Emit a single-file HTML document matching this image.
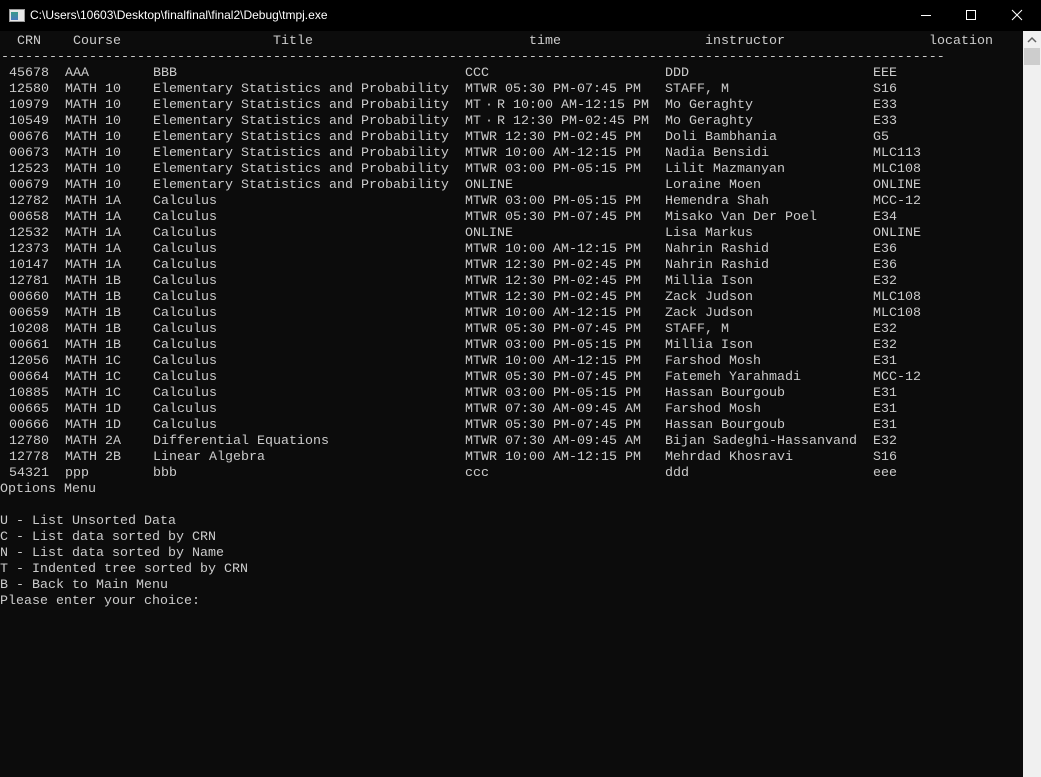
<!DOCTYPE html>
<html><head><meta charset="utf-8"><style>
html,body{margin:0;padding:0;width:1041px;height:777px;overflow:hidden;background:#0c0c0c}
#tb{position:absolute;left:0;top:0;width:1041px;height:31px;background:#000;color:#fff;font:12px "Liberation Sans",sans-serif}
#tb .t{position:absolute;left:30px;top:8px}
#tb .ic{position:absolute;left:9px;top:9px;width:14px;height:11px;background:#e8e8e8;border:1px solid #999}
#tb .ic:before{content:"";position:absolute;left:1px;top:2px;width:7px;height:8px;background:linear-gradient(#3a9a8a,#4a7ac0)}
#con{position:absolute;left:1px;top:34px;font-family:"Liberation Mono",monospace;font-size:13.333px;color:#cccccc;line-height:16px}
.r{position:relative;height:16px;white-space:pre}
.r span{position:absolute;top:0}
.c1{left:8px}.c2{left:64px}.c3{left:152px}.c4{left:464px}.c5{left:664px}.c6{left:872px}
.d{display:inline-block;width:16px;text-align:center}
#sb{position:absolute;left:1023px;top:31px;width:18px;height:746px;background:#f0f0f0}
#th{position:absolute;left:1024px;top:48px;width:16px;height:17px;background:#cdcdcd}
</style></head><body>
<div id="tb"><div class="ic"></div><div class="t">C:\Users\10603\Desktop\finalfinal\final2\Debug\tmpj.exe</div>
<svg style="position:absolute;left:0;top:0" width="1041" height="31"><g stroke="#fff" stroke-width="1" fill="none"><line x1="921" y1="15.5" x2="931" y2="15.5"/><rect x="966.5" y="10.5" width="9" height="9"/><line x1="1012" y1="10" x2="1022" y2="20"/><line x1="1022" y1="10" x2="1012" y2="20"/></g></svg></div>
<div id="sb"><svg width="18" height="18"><path d="M5 11 L9 7 L13 11" stroke="#606060" stroke-width="1.5" fill="none"/></svg></div><div id="th"></div>
<div id="con">
<div class="r"><span style="left:16px">CRN</span><span style="left:72px">Course</span><span style="left:272px">Title</span><span style="left:528px">time</span><span style="left:704px">instructor</span><span style="left:928px">location</span></div>
<div class="r">----------------------------------------------------------------------------------------------------------------------</div>
<div class="r"><span class="c1">45678</span><span class="c2">AAA</span><span class="c3">BBB</span><span class="c4">CCC</span><span class="c5">DDD</span><span class="c6">EEE</span></div>
<div class="r"><span class="c1">12580</span><span class="c2">MATH 10</span><span class="c3">Elementary Statistics and Probability</span><span class="c4">MTWR 05:30 PM-07:45 PM</span><span class="c5">STAFF, M</span><span class="c6">S16</span></div>
<div class="r"><span class="c1">10979</span><span class="c2">MATH 10</span><span class="c3">Elementary Statistics and Probability</span><span class="c4">MT<i class="d" style="font-style:normal">·</i>R 10:00 AM-12:15 PM</span><span class="c5">Mo Geraghty</span><span class="c6">E33</span></div>
<div class="r"><span class="c1">10549</span><span class="c2">MATH 10</span><span class="c3">Elementary Statistics and Probability</span><span class="c4">MT<i class="d" style="font-style:normal">·</i>R 12:30 PM-02:45 PM</span><span class="c5">Mo Geraghty</span><span class="c6">E33</span></div>
<div class="r"><span class="c1">00676</span><span class="c2">MATH 10</span><span class="c3">Elementary Statistics and Probability</span><span class="c4">MTWR 12:30 PM-02:45 PM</span><span class="c5">Doli Bambhania</span><span class="c6">G5</span></div>
<div class="r"><span class="c1">00673</span><span class="c2">MATH 10</span><span class="c3">Elementary Statistics and Probability</span><span class="c4">MTWR 10:00 AM-12:15 PM</span><span class="c5">Nadia Bensidi</span><span class="c6">MLC113</span></div>
<div class="r"><span class="c1">12523</span><span class="c2">MATH 10</span><span class="c3">Elementary Statistics and Probability</span><span class="c4">MTWR 03:00 PM-05:15 PM</span><span class="c5">Lilit Mazmanyan</span><span class="c6">MLC108</span></div>
<div class="r"><span class="c1">00679</span><span class="c2">MATH 10</span><span class="c3">Elementary Statistics and Probability</span><span class="c4">ONLINE</span><span class="c5">Loraine Moen</span><span class="c6">ONLINE</span></div>
<div class="r"><span class="c1">12782</span><span class="c2">MATH 1A</span><span class="c3">Calculus</span><span class="c4">MTWR 03:00 PM-05:15 PM</span><span class="c5">Hemendra Shah</span><span class="c6">MCC-12</span></div>
<div class="r"><span class="c1">00658</span><span class="c2">MATH 1A</span><span class="c3">Calculus</span><span class="c4">MTWR 05:30 PM-07:45 PM</span><span class="c5">Misako Van Der Poel</span><span class="c6">E34</span></div>
<div class="r"><span class="c1">12532</span><span class="c2">MATH 1A</span><span class="c3">Calculus</span><span class="c4">ONLINE</span><span class="c5">Lisa Markus</span><span class="c6">ONLINE</span></div>
<div class="r"><span class="c1">12373</span><span class="c2">MATH 1A</span><span class="c3">Calculus</span><span class="c4">MTWR 10:00 AM-12:15 PM</span><span class="c5">Nahrin Rashid</span><span class="c6">E36</span></div>
<div class="r"><span class="c1">10147</span><span class="c2">MATH 1A</span><span class="c3">Calculus</span><span class="c4">MTWR 12:30 PM-02:45 PM</span><span class="c5">Nahrin Rashid</span><span class="c6">E36</span></div>
<div class="r"><span class="c1">12781</span><span class="c2">MATH 1B</span><span class="c3">Calculus</span><span class="c4">MTWR 12:30 PM-02:45 PM</span><span class="c5">Millia Ison</span><span class="c6">E32</span></div>
<div class="r"><span class="c1">00660</span><span class="c2">MATH 1B</span><span class="c3">Calculus</span><span class="c4">MTWR 12:30 PM-02:45 PM</span><span class="c5">Zack Judson</span><span class="c6">MLC108</span></div>
<div class="r"><span class="c1">00659</span><span class="c2">MATH 1B</span><span class="c3">Calculus</span><span class="c4">MTWR 10:00 AM-12:15 PM</span><span class="c5">Zack Judson</span><span class="c6">MLC108</span></div>
<div class="r"><span class="c1">10208</span><span class="c2">MATH 1B</span><span class="c3">Calculus</span><span class="c4">MTWR 05:30 PM-07:45 PM</span><span class="c5">STAFF, M</span><span class="c6">E32</span></div>
<div class="r"><span class="c1">00661</span><span class="c2">MATH 1B</span><span class="c3">Calculus</span><span class="c4">MTWR 03:00 PM-05:15 PM</span><span class="c5">Millia Ison</span><span class="c6">E32</span></div>
<div class="r"><span class="c1">12056</span><span class="c2">MATH 1C</span><span class="c3">Calculus</span><span class="c4">MTWR 10:00 AM-12:15 PM</span><span class="c5">Farshod Mosh</span><span class="c6">E31</span></div>
<div class="r"><span class="c1">00664</span><span class="c2">MATH 1C</span><span class="c3">Calculus</span><span class="c4">MTWR 05:30 PM-07:45 PM</span><span class="c5">Fatemeh Yarahmadi</span><span class="c6">MCC-12</span></div>
<div class="r"><span class="c1">10885</span><span class="c2">MATH 1C</span><span class="c3">Calculus</span><span class="c4">MTWR 03:00 PM-05:15 PM</span><span class="c5">Hassan Bourgoub</span><span class="c6">E31</span></div>
<div class="r"><span class="c1">00665</span><span class="c2">MATH 1D</span><span class="c3">Calculus</span><span class="c4">MTWR 07:30 AM-09:45 AM</span><span class="c5">Farshod Mosh</span><span class="c6">E31</span></div>
<div class="r"><span class="c1">00666</span><span class="c2">MATH 1D</span><span class="c3">Calculus</span><span class="c4">MTWR 05:30 PM-07:45 PM</span><span class="c5">Hassan Bourgoub</span><span class="c6">E31</span></div>
<div class="r"><span class="c1">12780</span><span class="c2">MATH 2A</span><span class="c3">Differential Equations</span><span class="c4">MTWR 07:30 AM-09:45 AM</span><span class="c5">Bijan Sadeghi-Hassanvand</span><span class="c6">E32</span></div>
<div class="r"><span class="c1">12778</span><span class="c2">MATH 2B</span><span class="c3">Linear Algebra</span><span class="c4">MTWR 10:00 AM-12:15 PM</span><span class="c5">Mehrdad Khosravi</span><span class="c6">S16</span></div>
<div class="r"><span class="c1">54321</span><span class="c2">ppp</span><span class="c3">bbb</span><span class="c4">ccc</span><span class="c5">ddd</span><span class="c6">eee</span></div>
<div class="r" style="margin-left:-1px">Options Menu</div>
<div class="r"></div>
<div class="r" style="margin-left:-1px">U - List Unsorted Data</div>
<div class="r" style="margin-left:-1px">C - List data sorted by CRN</div>
<div class="r" style="margin-left:-1px">N - List data sorted by Name</div>
<div class="r" style="margin-left:-1px">T - Indented tree sorted by CRN</div>
<div class="r" style="margin-left:-1px">B - Back to Main Menu</div>
<div class="r" style="margin-left:-1px">Please enter your choice:</div>
</div>
</body></html>
